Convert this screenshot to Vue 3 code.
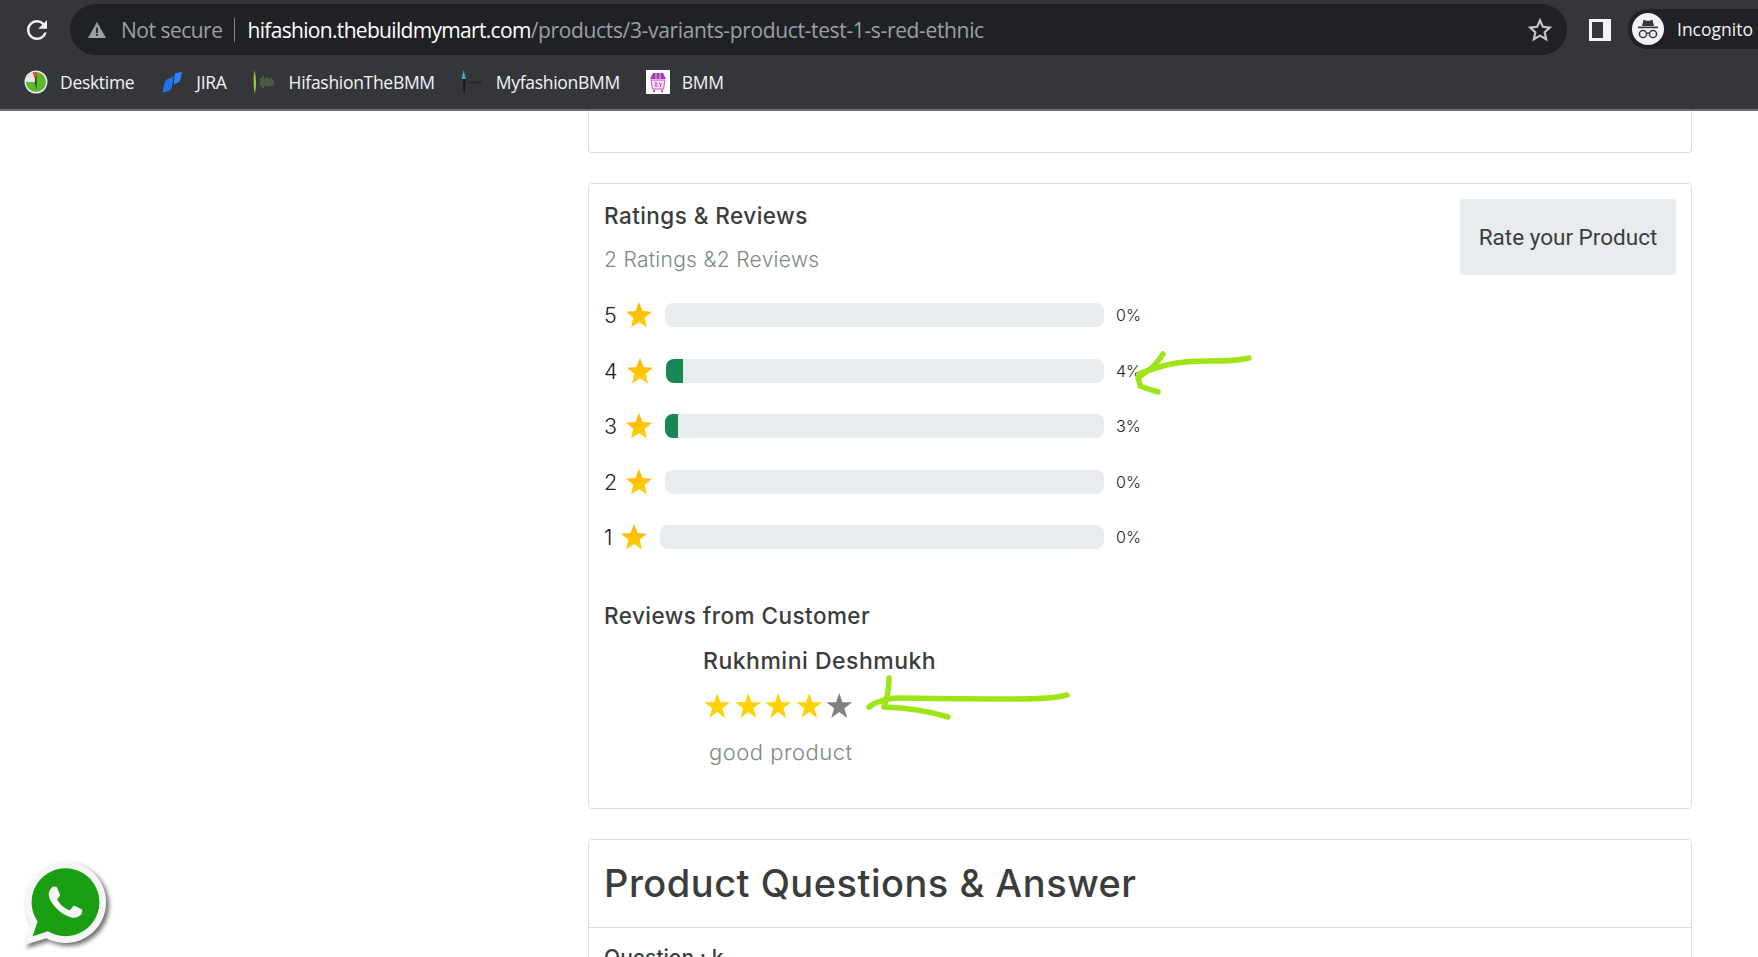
<template>
  <div class="page">
    <header class="chrome">
      <div class="toolbar">
        <svg class="reload" viewBox="0 0 24 24"><path d="M17.65 6.35A7.958 7.958 0 0 0 12 4c-4.42 0-7.99 3.58-7.99 8s3.57 8 7.99 8c3.73 0 6.84-2.55 7.73-6h-2.08A5.99 5.99 0 0 1 12 18c-3.31 0-6-2.69-6-6s2.69-6 6-6c1.66 0 3.14.69 4.22 1.78L13 11h7V4l-2.35 2.35z" fill="#f1f3f4"/></svg>
        <div class="omnibox">
          <svg class="warn" viewBox="0 0 20 20"><path d="M10 2 19 18H1z" fill="#9aa0a6"/><rect x="9.1" y="7.5" width="1.8" height="5.5" fill="#202124"/><rect x="9.1" y="14" width="1.8" height="1.8" fill="#202124"/></svg>
          <span class="not-secure">Not secure</span>
          <span class="sep"></span>
          <span class="url"><b>hifashion.thebuildmymart.com</b>/products/3-variants-product-test-1-s-red-ethnic</span>
          <svg class="bookmark-star" viewBox="0 0 24 24"><path d="M12 3.2l2.7 5.9 6.4.7-4.8 4.3 1.4 6.4L12 17.2l-5.7 3.3 1.4-6.4-4.8-4.3 6.4-.7z" fill="none" stroke="#c4c7c5" stroke-width="2" stroke-linejoin="miter"/></svg>
        </div>
        <svg class="side-panel" viewBox="0 0 22 22"><rect width="22" height="22" fill="#f1f3f4"/><rect x="3" y="3" width="11" height="16" fill="#35363a"/></svg>
        <div class="incognito">
          <svg class="spy" viewBox="0 0 32 32">
            <circle cx="16" cy="16" r="16" fill="#f1f3f4"/>
            <path d="M10 13l1.5-6.2 3 1h3l3-1L22 13z" fill="#35363a"/>
            <rect x="6" y="13.6" width="20" height="1.6" fill="#35363a"/>
            <circle cx="11" cy="21" r="3.6" fill="none" stroke="#35363a" stroke-width="1.5"/>
            <circle cx="21" cy="21" r="3.6" fill="none" stroke="#35363a" stroke-width="1.5"/>
            <path d="M14.5 20.4q1.5-1 3 0" fill="none" stroke="#35363a" stroke-width="1.4"/>
          </svg>
          <span>Incognito</span>
        </div>
      </div>
      <nav class="bookmarks">
        <a class="mark desktime">
          <svg class="ico" viewBox="0 0 24 24">
            <circle cx="12" cy="12" r="11.5" fill="#e8e8e8"/>
            <circle cx="12" cy="12" r="10" fill="#5cb82c"/>
            <path d="M12 12 2 12A10 10 0 0 1 9 2.5z" fill="#e6e6e6"/>
            <path d="M12 12 8.6 2.6A10 10 0 0 1 13 2z" fill="#e8501f"/>
            <path d="M12.6 3.5 11 12l1.4 8z" fill="#222"/>
          </svg>
          <span>Desktime</span>
        </a>
        <a class="mark jira">
          <svg class="ico" viewBox="0 0 24 24">
            <path d="M9 8.5 13.5 6.5 12 17q-.5 3-5 4.500L2.500 22.500 4.500 13q.8-3.200 4.500-4.500z" fill="#1f75f0"/>
            <path d="M15 3.500 22 1.800 20.500 9q-.6 3-3.500 4l-3.500 1.500 1-7.500q.2-2.500.5-3.500z" fill="#2a86f7"/>
          </svg>
          <span>JIRA</span>
        </a>
        <a class="mark hifashion">
          <svg class="ico" viewBox="0 0 24 24">
            <path d="M2.500 0Q5.500 12 2.800 24 .5 12 2.500 0z" fill="#8fce3a"/>
            <path d="M9 8v8M11 6v12M13 9v7M15 7v10M17 9v7M19 8v8M21 10v5" stroke="#5c6b4a" stroke-width="1.300"/>
          </svg>
          <span>HifashionTheBMM</span>
        </a>
        <a class="mark myfashion">
          <svg class="ico" viewBox="0 0 24 24">
            <path d="M3.500 0 6 9H1.500z" fill="#2fb5b5"/>
            <path d="M3 9h2.500L4.800 24 3.500 22z" fill="#16181c"/>
            <path d="M8 11h14v3H8z" fill="#2a2c30"/>
          </svg>
          <span>MyfashionBMM</span>
        </a>
        <a class="mark bmm">
          <svg class="ico" viewBox="0 0 24 24">
            <rect width="24" height="24" fill="#fff"/>
            <path d="M7 3h10l3 6H4z" fill="#a33bb0"/>
            <path d="M10 3v6M14 3v6" stroke="#e79be0" stroke-width="1.200"/>
            <path d="M5 10h14l-1.500 9h-11z" fill="#f6d8f2" stroke="#c05ac0" stroke-width="1"/>
            <path d="M8.500 13h2.500l-2 3h2.500M13 13l1.500 1.800L16 13m-1.500 1.800V17" fill="none" stroke="#b548b5" stroke-width="1"/>
            <circle cx="8" cy="21" r="1.200" fill="#b548b5"/>
            <circle cx="16" cy="21" r="1.200" fill="#b548b5"/>
          </svg>
          <span>BMM</span>
        </a>
      </nav>
    </header>

    <main class="content">
      <section class="card stub"></section>

      <section class="card ratings">
        <div class="ratings-head">
          <div>
            <h5 class="title">Ratings &amp; Reviews</h5>
            <p class="summary">2 Ratings &amp;2 Reviews</p>
          </div>
          <button class="rate-btn">Rate your Product</button>
        </div>

        <div class="bars">
          <div v-for="row in rows" :key="row.stars" class="bar-row">
            <span class="num">{{ row.stars }}</span>
            <svg class="row-star" viewBox="0 0 24 24">
              <defs>
                <linearGradient :id="'g' + row.stars" x1="0" y1="0" x2="0" y2="1">
                  <stop offset="0" stop-color="#ffb300"/>
                  <stop offset="1" stop-color="#ffd20f"/>
                </linearGradient>
              </defs>
              <path :fill="'url(#g' + row.stars + ')'" d="M12 0l3.300 8.300 8.700.6-6.700 5.700 2.100 8.900L12 18.700 4.600 23.500l2.100-8.900L0 8.900l8.700-.6z"/>
            </svg>
            <div class="track"><div class="fill" :style="{ width: row.pct + '%' }"></div></div>
            <span class="pct">{{ row.pct }}%</span>
          </div>
        </div>

        <h5 class="title reviews-title">Reviews from Customer</h5>
        <div class="review">
          <div class="reviewer">Rukhmini Deshmukh</div>
          <div class="stars">
            <svg v-for="n in 5" :key="n" class="small-star" viewBox="0 0 24 24"><path :fill="n < 5 ? '#ffd200' : '#808080'" d="M12 0l2.900 8.600H24l-7.300 5.500 2.700 8.900L12 17.600 4.600 23l2.700-8.900L0 8.600h9.100z"/></svg>
          </div>
          <p class="comment">good product</p>
        </div>
      </section>

      <section class="card qa">
        <h2 class="qa-title">Product Questions &amp; Answer</h2>
        <div class="qa-body">Question : k</div>
      </section>
    </main>

    <svg class="whatsapp" viewBox="0 0 84 84">
      <path d="M42 4a36 36 0 1 1-17 67.800L5 78l6.300-19A36 36 0 0 1 42 4z" fill="#f6f6f6"/>
      <path d="M42 10a30 30 0 1 1-15.500 55.700L13 70l4.300-13A30 30 0 0 1 42 10z" fill="#1a9e12"/>
      <g transform="translate(12.500 10.500) scale(2.450)">
        <path fill="#f6f6f6" d="M17.472 14.382c-.297-.149-1.758-.867-2.030-.967-.273-.099-.471-.148-.670.150-.197.297-.767.966-.940 1.164-.173.199-.347.223-.644.075-.297-.150-1.255-.463-2.390-1.475-.883-.788-1.480-1.761-1.653-2.059-.173-.297-.018-.458.130-.606.134-.133.298-.347.446-.520.149-.174.198-.298.298-.497.099-.198.050-.371-.025-.520-.075-.149-.669-1.612-.916-2.207-.242-.579-.487-.500-.669-.510-.173-.008-.371-.010-.570-.010-.198 0-.520.074-.792.372-.272.297-1.040 1.016-1.040 2.479 0 1.462 1.065 2.875 1.213 3.074.149.198 2.096 3.200 5.077 4.487.709.306 1.262.489 1.694.625.712.227 1.360.195 1.871.118.571-.085 1.758-.719 2.006-1.413.248-.694.248-1.289.173-1.413-.074-.124-.272-.198-.570-.347z"/>
      </g>
    </svg>

    <svg class="scribbles" viewBox="0 0 1758 957">
      <g fill="none" stroke="#9fe414" stroke-width="5.500" stroke-linecap="round" stroke-linejoin="round">
        <path d="M1249 358q-12 3-40 3-30 0-46 5-15 4-24 8"/>
        <path d="M1163 354q-8 12-14 16t-11 8q2 5 2 8 8 3 18 6"/>
        <path d="M1067 695q-15 4-50 4-50 0-116-1-20 0-32 9"/>
        <path d="M889 678q0 15-5 29 35 1 64 10"/>
      </g>
    </svg>
  </div>
</template>

<script setup>
const rows = [
  { stars: 5, pct: 0 },
  { stars: 4, pct: 4 },
  { stars: 3, pct: 3 },
  { stars: 2, pct: 0 },
  { stars: 1, pct: 0 },
];
</script>

<style>
html,
body {
  margin: 0;
  overflow: hidden;
  background: #fff;
}
</style>

<style scoped>
.page {
  position: relative;
  width: 1758px;
  height: 957px;
  overflow: hidden;
  background: #fff;
  font-family: Inter, "Liberation Sans", sans-serif;
}

/* browser frame */
.chrome {
  height: 109px;
  background: #35363a;
  border-bottom: 2px solid #6e6f73;
  font-family: "Open Sans", "Noto Sans", sans-serif;
}
.toolbar {
  height: 59px;
  display: flex;
  align-items: flex-start;
  padding-top: 4px;
  box-sizing: border-box;
}
.reload {
  width: 30px;
  height: 30px;
  margin: 11px 18px 0 22px;
  flex-shrink: 0;
}
.omnibox {
  width: 1497px;
  height: 51px;
  flex-shrink: 0;
  border-radius: 26px;
  background: #202124;
  display: flex;
  align-items: center;
  padding-left: 17px;
  box-sizing: border-box;
  font-size: 21px;
}
.warn {
  width: 20px;
  height: 20px;
}
.not-secure {
  margin-left: 14px;
  color: #9aa0a6;
  letter-spacing: -0.5px;
}
.sep {
  width: 1px;
  height: 24px;
  background: #80868b;
  margin: 0 13px 0 11px;
}
.url {
  color: #9aa0a6;
  letter-spacing: -0.35px;
  flex: 1;
}
.url b {
  font-weight: 400;
  color: #fff;
  letter-spacing: -0.68px;
}
.bookmark-star {
  width: 26px;
  height: 26px;
  margin-right: 14px;
}
.side-panel {
  width: 22px;
  height: 22px;
  margin: 15px 0 0 22px;
  flex-shrink: 0;
}
.incognito {
  display: flex;
  align-items: center;
  height: 40px;
  margin: 5px 0 0 17px;
  padding: 0 40px 0 4px;
  border-radius: 20px 0 0 20px;
  background: #202124;
  color: #f1f3f4;
  font-size: 17.500px;
  flex-shrink: 0;
}
.spy {
  width: 32px;
  height: 32px;
  margin-right: 13px;
}
.bookmarks {
  height: 45px;
  display: flex;
  align-items: center;
  font-size: 17.500px;
  color: #f1f3f4;
  letter-spacing: -0.3px;
}
.mark {
  display: flex;
  align-items: center;
  gap: 12px;
}
.ico {
  width: 24px;
  height: 24px;
  flex-shrink: 0;
}
.desktime { margin-left: 24px; }
.jira { margin-left: 26px; }
.hifashion { margin-left: 25px; gap: 13px; }
.myfashion { margin-left: 25px; }
.bmm { margin-left: 26px; }

/* page content */
.content {
  margin-left: 588px;
  width: 1104px;
  display: flex;
  flex-direction: column;
  gap: 30px;
}
.card {
  border: 1px solid #e3dadd;
  border-radius: 4px;
  box-sizing: border-box;
}
.stub {
  height: 42px;
  border-top: none;
  border-radius: 0 0 4px 4px;
}
.ratings {
  height: 626px;
  padding: 16px 15px;
}
.ratings-head {
  display: flex;
  justify-content: space-between;
  align-items: flex-start;
}
.title {
  margin: 0;
  padding-top: 1px;
  font-size: 22.500px;
  line-height: 30px;
  font-weight: 500;
  letter-spacing: 0.45px;
  color: #3a3d3c;
}
.summary {
  margin: 14px 0 0;
  font-size: 21px;
  line-height: 30px;
  font-weight: 300;
  letter-spacing: 0.3px;
  color: #7c8a84;
}
.rate-btn {
  width: 216px;
  height: 76px;
  margin-top: -1px;
  border: none;
  border-radius: 3px;
  background: #e9ecef;
  color: #3a3d3c;
  font-family: Roboto, sans-serif;
  font-size: 22.500px;
}
.bars {
  margin-top: 28px;
  width: 549px;
  display: flex;
  flex-direction: column;
  gap: 31.500px;
}
.bar-row {
  display: flex;
  align-items: center;
  height: 24px;
}
.num {
  font-size: 21.500px;
  font-weight: 300;
  color: #222;
  margin-right: 9px;
}
.row-star {
  width: 26px;
  height: 26px;
  margin-right: 13px;
  flex-shrink: 0;
}
.track {
  flex: 1;
  height: 24px;
  border-radius: 8px;
  background: #e9ecef;
  overflow: hidden;
}
.fill {
  height: 100%;
  background: #198754;
}
.pct {
  width: 37px;
  margin-left: 12px;
  font-size: 16px;
  font-weight: 300;
  color: #222;
}
.reviews-title {
  margin-top: 51px;
}
.review {
  margin: 14px 0 0 99px;
}
.reviewer {
  font-size: 23px;
  line-height: 32px;
  font-weight: 500;
  letter-spacing: 0.5px;
  color: #3a3d3c;
}
.stars {
  display: flex;
  gap: 4px;
  margin: 16px 0 0 1px;
}
.small-star {
  width: 26.500px;
  height: 26px;
}
.comment {
  margin: 18px 0 0 6px;
  font-size: 22px;
  line-height: 30px;
  font-weight: 300;
  letter-spacing: 0.5px;
  color: #7c8a84;
}
.qa {
  height: 200px;
}
.qa-title {
  margin: 0;
  padding: 0 15px;
  height: 87px;
  line-height: 86px;
  font-size: 38px;
  font-weight: 500;
  letter-spacing: 0.5px;
  color: #3a3d3c;
  border-bottom: 1px solid #e3dadd;
}
.qa-body {
  padding: 15px 15px;
  font-size: 21px;
  line-height: 30px;
  font-weight: 500;
  color: #3a3d3c;
}

/* floating bits */
.whatsapp {
  position: absolute;
  left: 18px;
  top: 857px;
  width: 95px;
  height: 95px;
  filter: drop-shadow(3px 3px 2px rgba(0, 0, 0, 0.55));
}
.scribbles {
  position: absolute;
  left: 0;
  top: 0;
  width: 1758px;
  height: 957px;
  pointer-events: none;
}
</style>
